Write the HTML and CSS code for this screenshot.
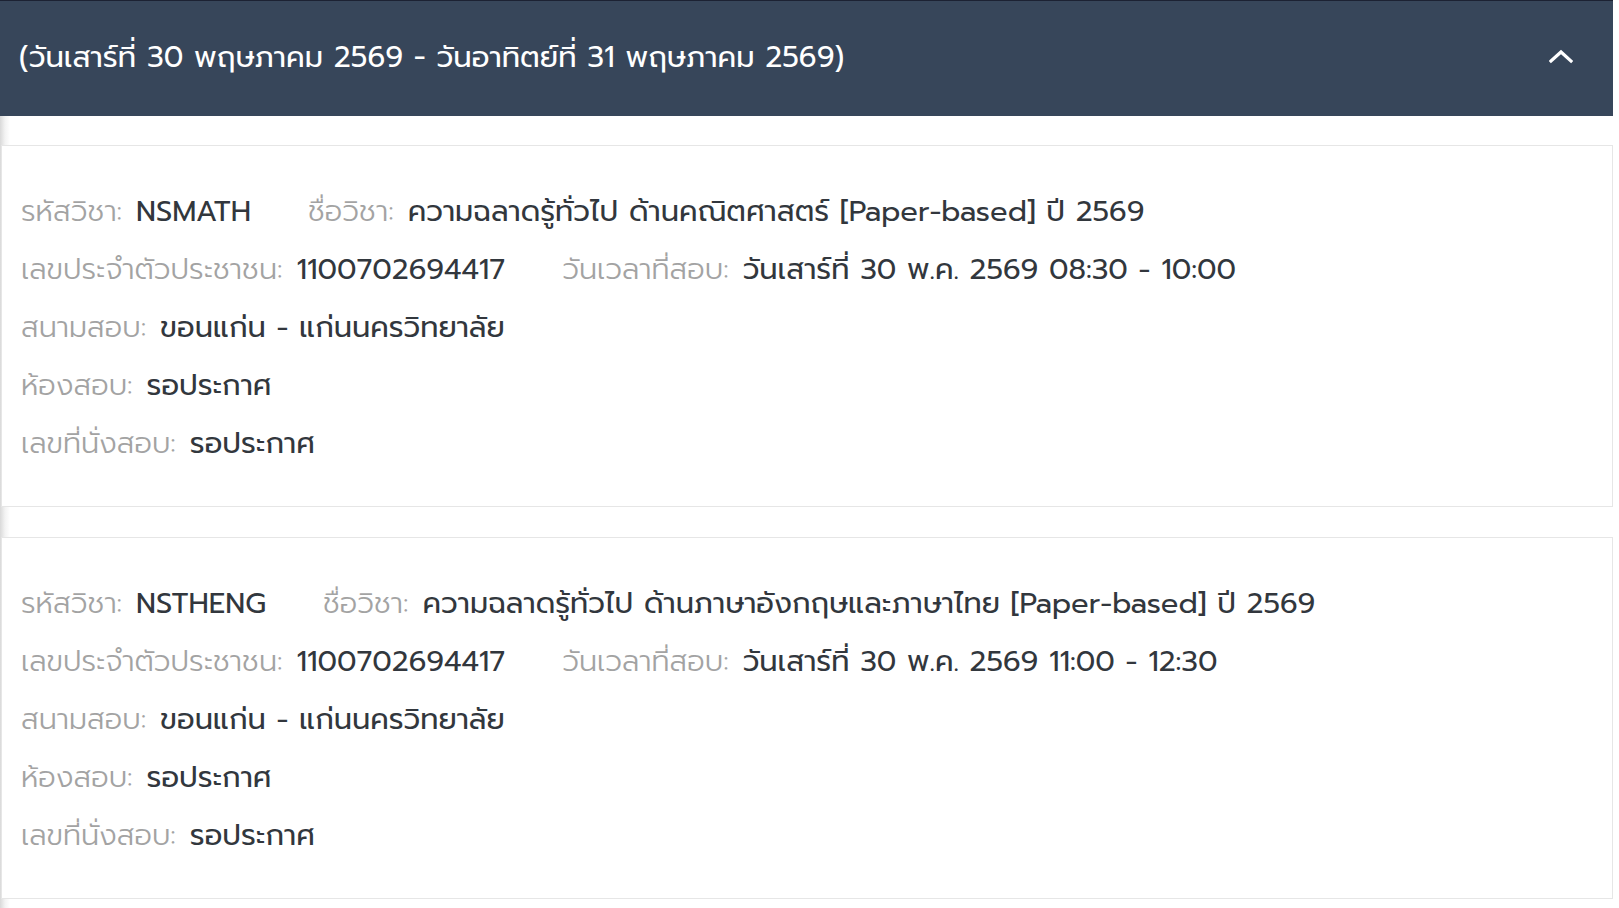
FILE: index.html
```html
<!DOCTYPE html>
<html lang="th">
<head>
<meta charset="utf-8">
<title>ตารางสอบ</title>
<link rel="stylesheet" href="styles.css">
</head>
<body>
<div class="page">
  <div class="panel-header">
    <span class="title">(วันเสาร์ที่ 30 พฤษภาคม 2569 - วันอาทิตย์ที่ 31 พฤษภาคม 2569)</span>
    <svg class="chev" width="24" height="16" viewBox="0 0 24 16"><polyline points="2,13 12,4 22,13" fill="none" stroke="#ffffff" stroke-width="3.2" stroke-linecap="square"/></svg>
  </div>
  <div class="panel-body">
    <div class="card">
      <div class="row"><span class="field"><span class="label">รหัสวิชา:</span><span class="value">NSMATH</span></span><span class="field"><span class="label">ชื่อวิชา:</span><span class="value">ความฉลาดรู้ทั่วไป ด้านคณิตศาสตร์ [Paper-based] ปี 2569</span></span></div>
      <div class="row"><span class="field"><span class="label">เลขประจำตัวประชาชน:</span><span class="value">1100702694417</span></span><span class="field"><span class="label">วันเวลาที่สอบ:</span><span class="value">วันเสาร์ที่ 30 พ.ค. 2569 08:30 - 10:00</span></span></div>
      <div class="row"><span class="field"><span class="label">สนามสอบ:</span><span class="value">ขอนแก่น - แก่นนครวิทยาลัย</span></span></div>
      <div class="row"><span class="field"><span class="label">ห้องสอบ:</span><span class="value">รอประกาศ</span></span></div>
      <div class="row"><span class="field"><span class="label">เลขที่นั่งสอบ:</span><span class="value">รอประกาศ</span></span></div>
    </div>
    <div class="card">
      <div class="row"><span class="field"><span class="label">รหัสวิชา:</span><span class="value">NSTHENG</span></span><span class="field"><span class="label">ชื่อวิชา:</span><span class="value">ความฉลาดรู้ทั่วไป ด้านภาษาอังกฤษและภาษาไทย [Paper-based] ปี 2569</span></span></div>
      <div class="row"><span class="field"><span class="label">เลขประจำตัวประชาชน:</span><span class="value">1100702694417</span></span><span class="field"><span class="label">วันเวลาที่สอบ:</span><span class="value">วันเสาร์ที่ 30 พ.ค. 2569 11:00 - 12:30</span></span></div>
      <div class="row"><span class="field"><span class="label">สนามสอบ:</span><span class="value">ขอนแก่น - แก่นนครวิทยาลัย</span></span></div>
      <div class="row"><span class="field"><span class="label">ห้องสอบ:</span><span class="value">รอประกาศ</span></span></div>
      <div class="row"><span class="field"><span class="label">เลขที่นั่งสอบ:</span><span class="value">รอประกาศ</span></span></div>
    </div>
  </div>
</div>
</body>
</html>
```

FILE: styles.css
```css
html, body {
  margin: 0;
  padding: 0;
  background: #ffffff;
}
body {
  font-family: "Prompt", "Noto Sans Thai", "Noto Sans", sans-serif;
  height: 908px;
  overflow: hidden;
}
.page {
  width: 1613px;
  min-height: 908px;
  background: linear-gradient(to right, #d9d9d9 0px, #f3f3f3 5px, #ffffff 10px);
}
.panel-header {
  box-sizing: border-box;
  height: 116px;
  background: #37465a;
  border-top: 1px solid #1c2233;
  display: flex;
  align-items: center;
  justify-content: space-between;
  padding: 0 40px 0 19px;
}
.title {
  color: #ffffff;
  font-size: 29.2px;
  line-height: 1;
  margin-top: -2px;
}
.chev {
  display: block;
  margin-top: -5px;
}
.panel-body {
  padding-top: 29px;
  display: flex;
  flex-direction: column;
  gap: 30px;
}
.card {
  box-sizing: border-box;
  height: 362px;
  margin-left: 1px;
  background: #ffffff;
  border: 1px solid #e6e6e6;
  padding: 36px 19px;
}
.row {
  display: flex;
  height: 58px;
  align-items: center;
  font-size: 29px;
  white-space: nowrap;
}
.field {
  display: flex;
  align-items: baseline;
  margin-right: 57px;
}
.label {
  color: #a3a3a3;
  font-weight: 300;
  margin-right: 14px;
}
.value {
  color: #32373d;
  font-weight: 400;
}
```
